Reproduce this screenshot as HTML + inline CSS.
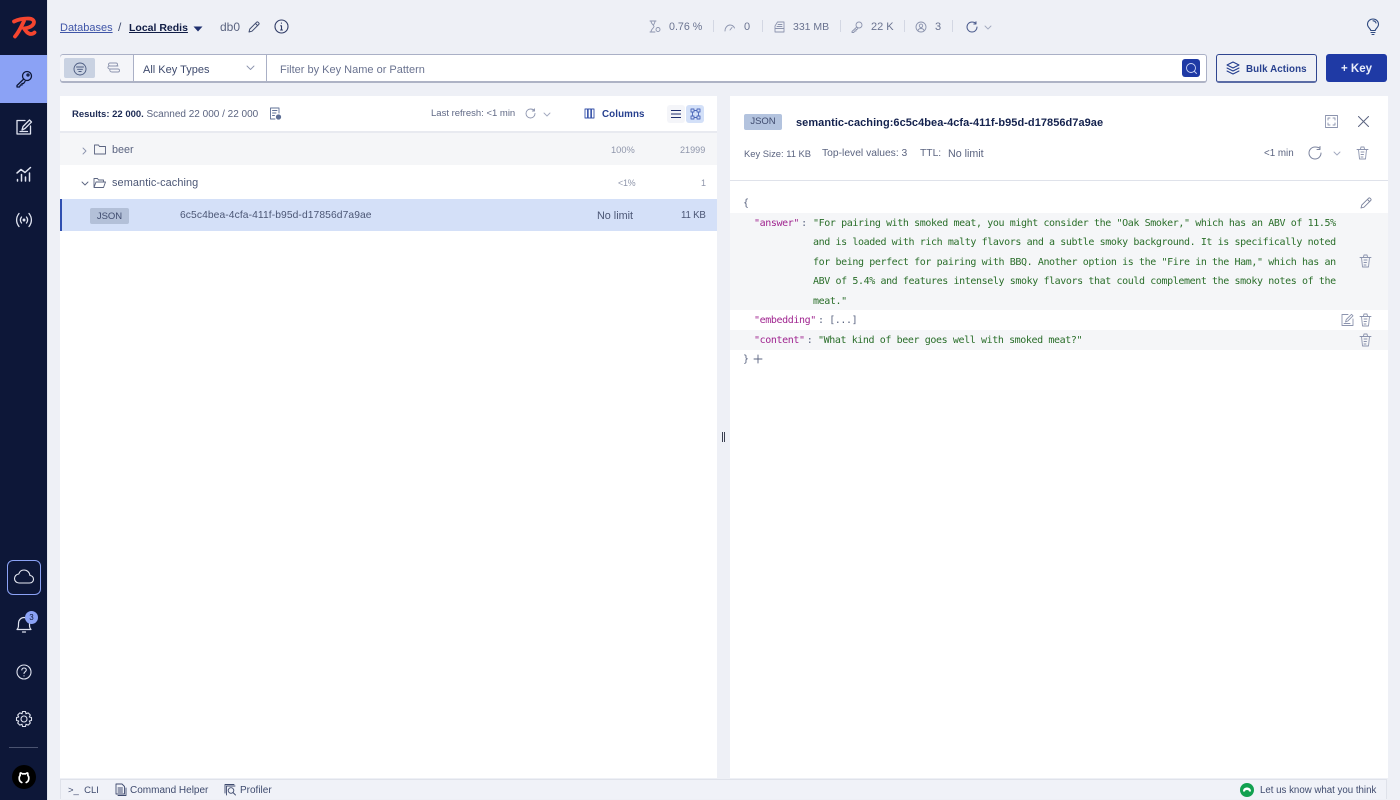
<!DOCTYPE html>
<html><head><meta charset="utf-8"><style>
html,body{margin:0;padding:0;width:1400px;height:800px;overflow:hidden;background:#eef0f6;font-family:"Liberation Sans",sans-serif;color:#3f4b6e}
.a{position:absolute;white-space:nowrap}
.t{position:absolute;white-space:nowrap;font-size:11px;line-height:14px;color:#4b5675}
svg{position:absolute;fill:none;stroke-linecap:round;stroke-linejoin:round}
.m{position:absolute;white-space:pre;font-family:"DejaVu Sans Mono",monospace;font-size:10px;line-height:14px;letter-spacing:-.4px;color:#2a6e2a}
.k{color:#a02590}.p{color:#5a6480}.c{margin-left:-3.500px}
.sep{position:absolute;top:20px;width:1px;height:12px;background:#d3d7e3}
</style></head><body>
<div class="a" style="left:0;top:0;width:47px;height:800px;background:#0d1738"></div>
<div class="a" style="left:0;top:55px;width:47px;height:48px;background:#8ba2f5"></div>
<div class="a" style="left:47px;top:0;width:1px;height:800px;background:#e2e5ee"></div>
<!-- logo -->
<svg style="left:10px;top:15px" width="28" height="25" viewBox="0 0 28 25"><path d="M4 6.500C8 4.500 14 3.500 18 3.500C23 3.500 25 6 23.500 9C22 11.500 18 13 14 13.500C15.500 15.500 17.500 19 21 19C22.500 19 23.500 18.500 24.500 17.500M14 6C12 10 9 17 5 21.500" stroke="#f5452f" stroke-width="3.800"/></svg>
<!-- nav icons -->
<svg style="left:15px;top:70px" width="18" height="18" viewBox="0 0 18 18" stroke="#0d1738" stroke-width="1.3"><circle cx="12" cy="6" r="4.500"/><circle cx="13" cy="5" r="1"/><path d="M8.800 9L2 15.500V17H4.500L5.500 15H7V13.500H8.500L10 11.500"/></svg>
<svg style="left:15px;top:118px" width="18" height="18" viewBox="0 0 18 18" stroke="#dfe3f0" stroke-width="1.300"><path d="M10 2.500H2V16H15.500V8M7 12L8 8.500L14.500 2L16.500 4L10 10.500ZM5 13.500H12.500"/></svg>
<svg style="left:15px;top:165px" width="18" height="18" viewBox="0 0 18 18" stroke="#dfe3f0" stroke-width="1.500"><path d="M2 8L6 4.500L10 7.500L15.500 2.500M2.500 14.500V16M6.500 9.500V16M10.500 12V16M14.500 8V16"/></svg>
<svg style="left:15px;top:211px" width="18" height="18" viewBox="0 0 18 18" stroke="#dfe3f0" stroke-width="1.300"><path d="M4 2.500C0.800 6.500 0.800 11.500 4 15.500M14 2.500C17.200 6.500 17.200 11.500 14 15.500M6.500 6C5 8 5 10 6.500 12M11.500 6C13 8 13 10 11.500 12"/><circle cx="9" cy="9" r=".8" fill="#dfe3f0"/></svg>
<div class="a" style="left:7px;top:560px;width:32px;height:33px;border:1px solid #8ba2f5;border-radius:6px"></div>
<svg style="left:13px;top:568px" width="22" height="18" viewBox="0 0 22 18" stroke="#e6e9f3" stroke-width="1.100"><path d="M6 15H16.500C19 15 20.500 13.200 20.500 11.200C20.500 9.200 19 7.500 17 7.500C16.500 4.200 14 2 11 2C8.500 2 6.500 3.600 5.800 6C3.200 6.200 1.500 8.300 1.500 10.600C1.500 13 3.500 15 6 15Z"/></svg>
<svg style="left:15px;top:614px" width="18" height="20" viewBox="0 0 18 20" stroke="#dfe3f0" stroke-width="1.200"><path d="M2 15.500C3.500 14 3.500 12.500 3.500 9.500C3.500 6 6 3.500 9 3.500C12 3.500 14.500 6 14.500 9.500C14.500 12.500 14.500 14 16 15.500ZM7.500 18H10.500"/></svg>
<div class="a" style="left:25px;top:611px;width:13px;height:13px;border-radius:50%;background:#8ba2f5;color:#0d1738;font-size:8px;line-height:13px;text-align:center">3</div>
<svg style="left:15px;top:663px" width="18" height="18" viewBox="0 0 18 18" stroke="#dfe3f0" stroke-width="1.100"><circle cx="9" cy="9" r="7"/><path d="M6.800 7C7 5.500 8 5 9 5C10.300 5 11.300 5.900 11.300 7C11.300 8.800 9 8.800 9 10.500M9 12.800V13"/></svg>
<svg style="left:15px;top:710px" width="18" height="18" viewBox="0 0 18 18" stroke="#dfe3f0" stroke-width="1.100"><circle cx="9" cy="9" r="3"/><path d="M7.500 1.500H10.500L11 3.800L13.200 2.900L15.300 5L14.300 7L16.500 7.500V10.500L14.300 11L15.300 13L13.200 15.100L11 14.200L10.500 16.500H7.500L7 14.200L4.800 15.100L2.700 13L3.700 11L1.500 10.500V7.500L3.700 7L2.700 5L4.800 2.900L7 3.800Z"/></svg>
<div class="a" style="left:9px;top:747px;width:29px;height:1px;background:#4a5370"></div>
<div class="a" style="left:12px;top:765px;width:24px;height:24px;border-radius:50%;background:#000"></div>
<svg style="left:17px;top:770px" width="14" height="14" viewBox="0 0 14 14" stroke="#fff" stroke-width="1.700"><path d="M4.800 12.500C3 11.800 2.200 10 2.200 8C2.200 6.800 2.600 6 3.200 5.300C3 4.500 3.100 3.600 3.400 3C4.200 3 4.900 3.400 5.500 3.900C6.400 3.700 7.600 3.700 8.500 3.900C9.100 3.400 9.800 3 10.600 3C10.900 3.600 11 4.500 10.800 5.300C11.400 6 11.800 6.800 11.800 8C11.800 10 11 11.800 9.200 12.500"/></svg>

<!-- breadcrumb -->
<div class="t" style="left:60px;top:21px;color:#3f55a8;text-decoration:underline;font-size:11px">Databases</div>
<div class="t" style="left:118px;top:20px;font-size:12px;color:#3f4b6e">/</div>
<div class="t" style="left:129px;top:21px;color:#101c45;text-decoration:underline;font-weight:bold;font-size:10.500px">Local Redis</div>
<svg style="left:193px;top:26px" width="10" height="6" viewBox="0 0 10 6"><path d="M0.500 0.500H9.500L5 5.500Z" fill="#1f2f6e"/></svg>
<div class="t" style="left:220px;top:20px;font-size:12px;color:#5b6480">db0</div>
<svg style="left:248px;top:21px" width="12" height="12" viewBox="0 0 12 12" stroke="#3f4b6e" stroke-width="1"><path d="M1 11L1.800 8L8.500 1.300C9 .8 9.700 .8 10.200 1.300L10.700 1.800C11.200 2.300 11.200 3 10.700 3.500L4 10.200ZM7.500 2.500L9.500 4.500"/></svg>
<svg style="left:274px;top:19px" width="15" height="15" viewBox="0 0 15 15" stroke="#2f3b66" stroke-width="1.100"><circle cx="7.500" cy="7.500" r="6.500"/><path d="M7.500 6.800V11M6.500 11H8.500M6.700 6.800H7.500M7.400 4V4.300"/></svg>

<!-- stats -->
<svg style="left:649px;top:20px" width="12" height="13" viewBox="0 0 12 13" stroke="#8c94ae" stroke-width=".9"><path d="M1 1H7M1 12H6M2 1C2 4 5 5 5 6.500C5 8 2 9 2 12M6 1C6 3 5 4 4.500 5"/><circle cx="9" cy="9.500" r="2"/></svg>
<div class="t" style="left:669px;top:20px;color:#6a7390;font-size:10.700px">0.76 %</div>
<div class="sep" style="left:713px"></div>
<svg style="left:724px;top:23px" width="12" height="9" viewBox="0 0 12 9" stroke="#8c94ae" stroke-width=".9"><path d="M1 8C1 4.500 3.500 2 6 2C8 2 9.500 3 10.500 5M6 7L8 4.500"/></svg>
<div class="t" style="left:744px;top:20px;color:#6a7390">0</div>
<div class="sep" style="left:762px"></div>
<svg style="left:774px;top:21px" width="11" height="12" viewBox="0 0 11 12" stroke="#8c94ae" stroke-width=".9"><path d="M3.500 1H10V11H1V5ZM1 7.500H10M4 3.500H8M3 5.500H8"/></svg>
<div class="t" style="left:793px;top:20px;color:#6a7390;font-size:10.500px">331 MB</div>
<div class="sep" style="left:840px"></div>
<svg style="left:851px;top:21px" width="12" height="12" viewBox="0 0 12 12" stroke="#8c94ae" stroke-width=".9"><circle cx="8" cy="4" r="3"/><path d="M5.800 6L1 10.500V11.500H2.800L3.500 10H5V8.500H6L7 7"/></svg>
<div class="t" style="left:871px;top:20px;color:#6a7390">22 K</div>
<div class="sep" style="left:904px"></div>
<svg style="left:915px;top:21px" width="12" height="12" viewBox="0 0 12 12" stroke="#8c94ae" stroke-width=".9"><circle cx="6" cy="6" r="5"/><circle cx="6" cy="4.800" r="1.700"/><path d="M3 9.500C3.500 8 4.500 7.500 6 7.500C7.500 7.500 8.500 8 9 9.500"/></svg>
<div class="t" style="left:935px;top:20px;color:#6a7390">3</div>
<div class="sep" style="left:952px"></div>
<svg style="left:966px;top:21px" width="12" height="12" viewBox="0 0 12 12" stroke="#4a5a8c" stroke-width="1"><path d="M10 2.500C9 1.500 7.500 1 6 1C3.200 1 1 3.200 1 6C1 8.800 3.200 11 6 11C8.800 11 11 8.800 11 6M10 .8V3H7.800"/></svg>
<svg style="left:984px;top:25px" width="8" height="5" viewBox="0 0 8 5" stroke="#a2a9bf" stroke-width=".9"><path d="M1 1L4 4L7 1"/></svg>
<svg style="left:1366px;top:18px" width="14" height="18" viewBox="0 0 14 18" stroke="#2f4a80" stroke-width="1.100"><path d="M4.800 12.500C4.500 10.500 1.500 9.500 1.500 6.300C1.500 3.200 4 1 7 1C10 1 12.500 3.200 12.500 6.300C12.500 9.500 9.500 10.500 9.200 12.500ZM5 14.500H9M6 16.500H8M7 2.800C8.500 2.800 9.500 3.500 10 5"/></svg>

<!-- filter bar -->
<div class="a" style="left:60px;top:54px;width:1145px;height:26px;background:#fff;border:1px solid #aab0c6;border-bottom:2px solid #aeb3c5;border-radius:3px"></div>
<div class="a" style="left:60px;top:55px;width:73px;height:26px;background:#f4f5f9;border-right:1px solid #aab0c6;border-radius:3px 0 0 3px"></div>
<div class="a" style="left:64px;top:58px;width:31px;height:20px;background:#c9d2e2;border-radius:2px"></div>
<svg style="left:73px;top:62px" width="14" height="14" viewBox="0 0 14 14" stroke="#4a5a80" stroke-width=".9"><circle cx="7" cy="7" r="6"/><path d="M3.500 5H10.500M4.500 7.300H9.500M5.800 9.500H8.200"/></svg>
<svg style="left:107px;top:62px" width="14" height="12" viewBox="0 0 14 12" stroke="#8c94ae" stroke-width=".9"><path d="M3 1H9C11 1 11 4 9 4H3C1 4 1 1 3 1ZM2 4C0 5 1 7 3 7H11C13 7 13 10 11 10H5C3 10 2.500 8.500 3 7M6 4H11"/></svg>
<div class="t" style="left:143px;top:63px;color:#3f4b6e;font-size:11px">All Key Types</div>
<svg style="left:246px;top:65px" width="9" height="6" viewBox="0 0 9 6" stroke="#8c94ae" stroke-width=".9"><path d="M1 1L4.500 4.500L8 1"/></svg>
<div class="a" style="left:266px;top:55px;width:1px;height:26px;background:#aab0c6"></div>
<div class="t" style="left:280px;top:63px;color:#6a7390;font-size:11px">Filter by Key Name or Pattern</div>
<div class="a" style="left:1182px;top:59px;width:18px;height:18px;background:#1f3aa5;border-radius:3px"></div>
<svg style="left:1185px;top:62px" width="13" height="13" viewBox="0 0 13 13" stroke="#cdd6f5" stroke-width=".9"><circle cx="6" cy="6" r="4.500"/><path d="M9.500 9.500L11.500 11.500"/></svg>
<div class="a" style="left:1216px;top:54px;width:99px;height:26px;border:1px solid #2f4590;border-bottom:2px solid #5a6ba5;border-radius:3px;background:#eef0f6"></div>
<svg style="left:1226px;top:61px" width="14" height="14" viewBox="0 0 14 14" stroke="#1f3a8c" stroke-width="1"><path d="M7 1L13 4L7 7L1 4ZM1 7L7 10L13 7M1 10L7 13L13 10"/></svg>
<div class="t" style="left:1246px;top:63px;font-size:9.800px;font-weight:bold;color:#27408f;letter-spacing:.1px">Bulk Actions</div>
<div class="a" style="left:1326px;top:54px;width:61px;height:28px;background:#1f3aa5;border-radius:3px;color:#e9edfa;font-size:11.500px;line-height:30px;text-align:center;font-weight:bold">+ Key</div>

<!-- left panel -->
<div class="a" style="left:60px;top:96px;width:657px;height:682px;background:#fff"></div>
<div class="a" style="left:60px;top:131px;width:657px;height:2px;background:#e8eaf0"></div>
<div class="t" style="left:72px;top:108px;font-size:9.500px;color:#1c2a54"><b>Results: 22 000.</b> <span style="color:#5b6480;font-size:10px">Scanned 22 000 / 22 000</span></div>
<svg style="left:269px;top:107px" width="13" height="14" viewBox="0 0 13 14" stroke="#5f7096" stroke-width=".9"><path d="M6 12H1.500V1H10V6M3.500 3.500H8M3.500 6H7M3.500 8.500H5.500"/><circle cx="9.500" cy="10" r="2.200" fill="#5f7096"/></svg>
<div class="t" style="left:431px;top:107px;font-size:9.500px;color:#5f6885">Last refresh: &lt;1 min</div>
<svg style="left:525px;top:108px" width="11" height="11" viewBox="0 0 11 11" stroke="#8c94ae" stroke-width=".9"><path d="M9.500 2.500C8.500 1.500 7 1 5.500 1C3 1 1 3 1 5.500C1 8 3 10 5.500 10C8 10 10 8 10 5.500M9.500 .8V3H7.300"/></svg>
<svg style="left:543px;top:112px" width="8" height="5" viewBox="0 0 8 5" stroke="#a2a9bf" stroke-width=".9"><path d="M1 1L4 4L7 1"/></svg>
<svg style="left:584px;top:108px" width="11" height="11" viewBox="0 0 11 11" stroke="#3450a8" stroke-width=".9"><path d="M1 1H3.500V10H1ZM4.200 1H6.800V10H4.200ZM7.500 1H10V10H7.500Z"/></svg>
<div class="t" style="left:602px;top:108px;font-size:9.800px;font-weight:bold;color:#27408f;letter-spacing:.1px">Columns</div>
<div class="a" style="left:667px;top:105px;width:18px;height:18px;background:#f4f5f9;border-radius:3px"></div>
<svg style="left:671px;top:109px" width="10" height="10" viewBox="0 0 10 10" stroke="#1f2f6e" stroke-width="1"><path d="M0 1.500H10M0 5H10M0 8.500H10"/></svg>
<div class="a" style="left:686px;top:105px;width:18px;height:18px;background:#d3e0f8;border-radius:3px"></div>
<svg style="left:690px;top:108px" width="11" height="12" viewBox="0 0 11 12" stroke="#4a66b8" stroke-width=".9"><path d="M1 1H4V4H1ZM7 1H10V4H7ZM1 8H4V11H1ZM7 8H10V11H7ZM4 2.500H7M2.500 4V8M4 9.500H7M8.500 4V8"/></svg>

<div class="a" style="left:60px;top:133px;width:657px;height:32px;background:#f5f6f8"></div>
<svg style="left:82px;top:147px" width="5" height="8" viewBox="0 0 5 8" stroke="#8c94ae" stroke-width=".9"><path d="M1 1L4 4L1 7"/></svg>
<svg style="left:94px;top:144px" width="12" height="11" viewBox="0 0 12 11" stroke="#5b6480" stroke-width=".9"><path d="M.5 1H4.500L5.500 2.500H11.500V10H.5Z"/></svg>
<div class="t" style="left:112px;top:143px;color:#5b6480;font-size:10.800px">beer</div>
<div class="t" style="left:611px;top:143px;font-size:9.300px;color:#8f96ab">100%</div>
<div class="t" style="left:680px;top:143px;font-size:9.100px;color:#8f96ab">21999</div>
<svg style="left:81px;top:181px" width="8" height="5" viewBox="0 0 8 5" stroke="#5b6480" stroke-width=".9"><path d="M1 1L4 4L7 1"/></svg>
<svg style="left:93px;top:177px" width="13" height="12" viewBox="0 0 13 12" stroke="#5b6480" stroke-width=".9"><path d="M1 10V1.500H4.500L5.500 3H10.500V5M1 10.500L3 5H12.500L10.500 10.500Z"/></svg>
<div class="t" style="left:112px;top:176px;color:#4b5675;font-size:10.900px;letter-spacing:.1px">semantic-caching</div>
<div class="t" style="left:618px;top:176px;font-size:9px;letter-spacing:-.3px;color:#8f96ab">&lt;1%</div>
<div class="t" style="left:701px;top:176px;font-size:9px;color:#8f96ab">1</div>
<div class="a" style="left:60px;top:199px;width:657px;height:32px;background:#d4e0f8"></div>
<div class="a" style="left:60px;top:199px;width:2px;height:32px;background:#2f4fb0"></div>
<div class="a" style="left:90px;top:208px;width:39px;height:16px;background:#b3c0d8;border-radius:2px;color:#3f4b6e;font-size:9.500px;line-height:17px;text-align:center">JSON</div>
<div class="t" style="left:180px;top:209px;color:#4b5675;font-size:10.300px;letter-spacing:.08px">6c5c4bea-4cfa-411f-b95d-d17856d7a9ae</div>
<div class="t" style="left:597px;top:209px;font-size:10.800px;color:#4b5675">No limit</div>
<div class="t" style="left:681px;top:209px;font-size:9.700px;letter-spacing:-.2px;color:#4b5675">11 KB</div>

<!-- divider handle -->
<div class="a" style="left:722px;top:432px;width:1px;height:10px;background:#3a3f50"></div>
<div class="a" style="left:724px;top:432px;width:1px;height:10px;background:#3a3f50"></div>

<!-- right panel -->
<div class="a" style="left:730px;top:96px;width:658px;height:682px;background:#fff"></div>
<div class="a" style="left:730px;top:180px;width:658px;height:1px;background:#dfe2ea"></div>
<div class="a" style="left:744px;top:114px;width:38px;height:16px;background:#b3c3de;border-radius:2px;color:#3f4b6e;font-size:9.500px;line-height:16px;text-align:center">JSON</div>
<div class="t" style="left:796px;top:116px;color:#14224e;font-size:11px;font-weight:bold;letter-spacing:.05px">semantic-caching:6c5c4bea-4cfa-411f-b95d-d17856d7a9ae</div>
<div class="t" style="left:744px;top:147px;font-size:9.400px;color:#5b6480">Key Size: 11 KB</div>
<div class="t" style="left:822px;top:147px;font-size:10.300px;color:#5b6480">Top-level values: 3</div>
<div class="t" style="left:920px;top:147px;font-size:10.300px;color:#5b6480">TTL:</div>
<div class="t" style="left:948px;top:147px;font-size:10.700px;color:#5b6480">No limit</div>
<svg style="left:1325px;top:115px" width="13" height="13" viewBox="0 0 13 13" stroke="#8c94ae" stroke-width=".9"><path d="M.5 .5H12.500V12.500H.5ZM3 5V3H5M8 3H10V5M3 8V10H5M8 10H10V8"/></svg>
<svg style="left:1358px;top:116px" width="11" height="11" viewBox="0 0 11 11" stroke="#5b6480" stroke-width="1"><path d="M.5 .5L10.500 10.500M10.500 .5L.5 10.500"/></svg>
<div class="t" style="left:1264px;top:147px;font-size:9.800px;color:#5b6480">&lt;1 min</div>
<svg style="left:1308px;top:146px" width="14" height="14" viewBox="0 0 14 14" stroke="#7c849e" stroke-width="1"><path d="M12 2.500C11 1.500 9 1 7 1C3.700 1 1 3.700 1 7C1 10.300 3.700 13 7 13C10.300 13 13 10.300 13 7M12 .5V3.500H9"/></svg>
<svg style="left:1333px;top:151px" width="8" height="5" viewBox="0 0 8 5" stroke="#a2a9bf" stroke-width=".9"><path d="M1 1L4 4L7 1"/></svg>
<svg style="left:1356px;top:146px" width="13" height="14" viewBox="0 0 13 14" stroke="#8c94ae" stroke-width=".9"><path d="M1 3.500H12M2.500 3.500L3.500 13H9.500L10.500 3.500M4.500 3L5 1H8L8.500 3M5 6H8M5 8.500H7.500M5 11H7"/></svg>

<!-- json rows -->
<div class="a" style="left:730px;top:213px;width:658px;height:97px;background:#f5f6f8"></div>
<div class="a" style="left:730px;top:330px;width:658px;height:20px;background:#f5f6f8"></div>
<div class="m p" style="left:743px;top:197px">{</div>
<div class="m" style="left:754px;top:217px"><span class="k">"answer"</span><span class="p c"> :</span></div>
<div class="m" style="left:813px;top:217px">"For pairing with smoked meat, you might consider the "Oak Smoker," which has an ABV of 11.5%</div>
<div class="m" style="left:813px;top:236px">and is loaded with rich malty flavors and a subtle smoky background. It is specifically noted</div>
<div class="m" style="left:813px;top:256px">for being perfect for pairing with BBQ. Another option is the "Fire in the Ham," which has an</div>
<div class="m" style="left:813px;top:275px">ABV of 5.4% and features intensely smoky flavors that could complement the smoky notes of the</div>
<div class="m" style="left:813px;top:295px">meat."</div>
<div class="m" style="left:754px;top:314px"><span class="k">"embedding"</span><span class="p c"> : [...]</span></div>
<div class="m" style="left:754px;top:334px"><span class="k">"content"</span><span class="p c"> : </span>"What kind of beer goes well with smoked meat?"</div>
<div class="m p" style="left:743px;top:353px">}</div>
<svg style="left:753px;top:354px" width="10" height="10" viewBox="0 0 10 10" stroke="#5b6480" stroke-width=".9"><path d="M5 1V9M1 5H9"/></svg>
<svg style="left:1360px;top:197px" width="12" height="12" viewBox="0 0 12 12" stroke="#7c849e" stroke-width=".9"><path d="M1 11L1.800 8L8.500 1.300C9 .8 9.700 .8 10.200 1.300L10.700 1.800C11.200 2.300 11.200 3 10.700 3.500L4 10.200ZM7.500 2.500L9.500 4.500"/></svg>
<svg style="left:1359px;top:254px" width="13" height="14" viewBox="0 0 13 14" stroke="#8c94ae" stroke-width=".9"><path d="M1 3.500H12M2.500 3.500L3.500 13H9.500L10.500 3.500M4.500 3L5 1H8L8.500 3M5 6H8M5 8.500H7.500M5 11H7"/></svg>
<svg style="left:1341px;top:313px" width="13" height="13" viewBox="0 0 13 13" stroke="#8c94ae" stroke-width=".9"><path d="M7 1.500H1V12.500H12V6M4.500 9L5.300 6.500L10.500 1.300L12 2.800L6.800 8ZM3 10.500H9"/></svg>
<svg style="left:1359px;top:313px" width="13" height="14" viewBox="0 0 13 14" stroke="#8c94ae" stroke-width=".9"><path d="M1 3.500H12M2.500 3.500L3.500 13H9.500L10.500 3.500M4.500 3L5 1H8L8.500 3M5 6H8M5 8.500H7.500M5 11H7"/></svg>
<svg style="left:1359px;top:333px" width="13" height="14" viewBox="0 0 13 14" stroke="#8c94ae" stroke-width=".9"><path d="M1 3.500H12M2.500 3.500L3.500 13H9.500L10.500 3.500M4.500 3L5 1H8L8.500 3M5 6H8M5 8.500H7.500M5 11H7"/></svg>

<!-- bottom bar -->
<div class="a" style="left:60px;top:779px;width:1327px;height:20px;background:#f0f2f8;border:1px solid #dfe2ea;border-bottom:0;box-sizing:border-box"></div>
<div class="t" style="left:68px;top:784px;font-size:9.500px;color:#3f4b6e">&gt;_&nbsp;&nbsp;CLI</div>
<svg style="left:115px;top:783px" width="12" height="13" viewBox="0 0 12 13" stroke="#3f4b6e" stroke-width=".9"><path d="M1 1H7L9.500 3.500V11H1ZM3 5H7.500M3 7H7.500M3 9H7.500M11 5V12.500H3"/></svg>
<div class="t" style="left:130px;top:784px;font-size:10px;color:#3f4b6e">Command Helper</div>
<svg style="left:224px;top:783px" width="13" height="13" viewBox="0 0 13 13" stroke="#3f4b6e" stroke-width=".9"><path d="M1 10V1.500H10M2.500 12V3H11"/><circle cx="7" cy="7.500" r="2.800"/><path d="M9 9.500L11.500 12"/></svg>
<div class="t" style="left:240px;top:784px;font-size:10px;color:#3f4b6e">Profiler</div>
<div class="a" style="left:1240px;top:783px;width:14px;height:14px;border-radius:50%;background:#12a150"></div>
<svg style="left:1240px;top:783px" width="14" height="14" viewBox="0 0 14 14"><path d="M3 8.500C3 5.500 5 4.500 7 4.500C9 4.500 11 5.500 11 8.500H9C9 7.300 8 7 7 7C6 7 5 7.300 5 8.500Z" fill="#fff"/></svg>
<div class="t" style="left:1260px;top:784px;font-size:9.700px;color:#3f4b6e">Let us know what you think</div>
</body></html>
